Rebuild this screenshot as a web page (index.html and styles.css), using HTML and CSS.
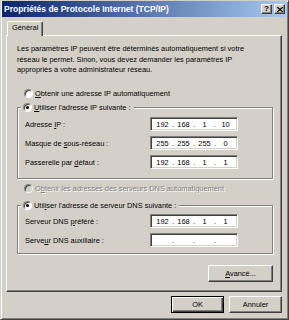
FILE: index.html
```html
<!DOCTYPE html>
<html lang="fr">

<head>
    <meta charset="UTF-8">
    <meta name="viewport" content="width=device-width, initial-scale=1.0">
    <title>Propriétés de Protocole Internet (TCP/IP)</title>
    <link rel="stylesheet" href="styles.css">
</head>

<body>

    <div class="window">
        <div class="titlebar">
            <span class="title">Propriétés de Protocole Internet (TCP/IP)</span>
            <div class="caption-buttons">
                <span class="cap-btn help">?</span>
                <span class="cap-btn">
                    <svg width="6" height="5" viewBox="0 0 6 5">
                        <path d="M0 0 L6 5 M6 0 L0 5" stroke="#000" stroke-width="1.3" fill="none" />
                    </svg>
                </span>
            </div>
        </div>

        <div class="tabs">
            <div class="tab">Général</div>
        </div>

        <div class="panel">
            <p class="intro">Les paramètres IP peuvent être déterminés automatiquement si votre<br>
                réseau le permet. Sinon, vous devez demander les paramètres IP<br>
                appropriés à votre administrateur réseau.</p>

            <div class="option first">
                <span class="radio"></span>
                <span><u>O</u>btenir une adresse IP automatiquement</span>
            </div>

            <div class="group group-ip">
                <div class="group-title">
                    <span class="radio on"></span>
                    <span><u>U</u>tiliser l'adresse IP suivante :</span>
                </div>
                <div class="fields">
                    <div class="field">
                        <span class="field-label">Adresse <u>I</u>P :</span>
                        <div class="ip">
                            <span class="octet">192</span><span class="dot">.</span>
                            <span class="octet">168</span><span class="dot">.</span>
                            <span class="octet">1</span><span class="dot">.</span>
                            <span class="octet">10</span>
                        </div>
                    </div>
                    <div class="field">
                        <span class="field-label">Masque de <u>s</u>ous-réseau :</span>
                        <div class="ip">
                            <span class="octet">255</span><span class="dot">.</span>
                            <span class="octet">255</span><span class="dot">.</span>
                            <span class="octet">255</span><span class="dot">.</span>
                            <span class="octet">0</span>
                        </div>
                    </div>
                    <div class="field">
                        <span class="field-label">Passerelle par <u>d</u>éfaut :</span>
                        <div class="ip">
                            <span class="octet">192</span><span class="dot">.</span>
                            <span class="octet">168</span><span class="dot">.</span>
                            <span class="octet">1</span><span class="dot">.</span>
                            <span class="octet">1</span>
                        </div>
                    </div>
                </div>
            </div>

            <div class="option disabled">
                <span class="radio"></span>
                <span>O<u>b</u>tenir les adresses des serveurs DNS automatiquement</span>
            </div>

            <div class="group group-dns">
                <div class="group-title">
                    <span class="radio on"></span>
                    <span>Util<u>i</u>ser l'adresse de serveur DNS suivante :</span>
                </div>
                <div class="fields">
                    <div class="field">
                        <span class="field-label">Serveur DNS <u>p</u>référé :</span>
                        <div class="ip">
                            <span class="octet">192</span><span class="dot">.</span>
                            <span class="octet">168</span><span class="dot">.</span>
                            <span class="octet">1</span><span class="dot">.</span>
                            <span class="octet">1</span>
                        </div>
                    </div>
                    <div class="field">
                        <span class="field-label">Serve<u>u</u>r DNS auxiliaire :</span>
                        <div class="ip">
                            <span class="octet"></span><span class="dot">.</span>
                            <span class="octet"></span><span class="dot">.</span>
                            <span class="octet"></span><span class="dot">.</span>
                            <span class="octet"></span>
                        </div>
                    </div>
                </div>
            </div>

            <div class="adv-row">
                <button type="button" class="btn adv"><u>A</u>vancé...</button>
            </div>
        </div>

        <div class="actions">
            <button type="button" class="btn default">OK</button>
            <button type="button" class="btn">Annuler</button>
        </div>
    </div>

</body>

</html>
```

FILE: styles.css
```css
body {
    margin: 0;
    font-family: "Liberation Sans", Arial, sans-serif;
    font-size: 7.4px;
    color: #000;
    background: #fff;
}

u {
    text-underline-offset: 1px;
}

.window {
    box-sizing: border-box;
    width: 289px;
    height: 320px;
    background: #d4d0c8;
    border: 1px solid;
    border-color: #d4d0c8 #404040 #404040 #d4d0c8;
    box-shadow: inset 1px 1px #fff, inset -1px -1px #808080;
    padding: 0 1px 1px 1px;
}

.titlebar {
    height: 16px;
    display: flex;
    align-items: center;
    justify-content: space-between;
    padding: 0 2px 0 2px;
    background: linear-gradient(to right, #0a246a, #a6caf0);
}

.title {
    color: #fff;
    font-weight: bold;
    font-size: 8.5px;
}

.caption-buttons {
    display: flex;
    gap: 2px;
}

.cap-btn {
    box-sizing: border-box;
    width: 11px;
    height: 10px;
    display: flex;
    align-items: center;
    justify-content: center;
    background: #d4d0c8;
    border: 1px solid;
    border-color: #fff #404040 #404040 #fff;
    box-shadow: inset -1px -1px #808080;
}

.help {
    font-weight: bold;
    font-size: 8px;
    line-height: 8px;
}

.tabs {
    display: flex;
    margin-top: 4px;
    padding-left: 5px;
}

.tab {
    position: relative;
    z-index: 1;
    box-sizing: border-box;
    width: 36px;
    height: 15px;
    margin-bottom: -1px;
    padding-left: 4px;
    line-height: 11px;
    background: #d4d0c8;
    border: 1px solid;
    border-bottom: none;
    border-color: #fff #404040 #fff #fff;
    border-radius: 2px 2px 0 0;
    box-shadow: inset -1px 0 #808080;
}

.panel {
    box-sizing: border-box;
    width: 276px;
    margin-left: 4px;
    padding: 8px 8px 9px 10px;
    border: 1px solid;
    border-color: #fff #404040 #404040 #fff;
    box-shadow: inset -1px -1px #808080;
}

.intro {
    margin: 0;
    line-height: 10.5px;
}

.option {
    display: flex;
    align-items: center;
    gap: 2px;
    height: 12px;
    padding-left: 7px;
}

.option.first {
    margin-top: 11.5px;
}

.option.disabled {
    margin-top: 3px;
    color: #808080;
    text-shadow: 1px 1px #fff;
}

.radio {
    flex: none;
    box-sizing: border-box;
    width: 9px;
    height: 9px;
    display: flex;
    align-items: center;
    justify-content: center;
    border-radius: 50%;
    border: 1px solid;
    border-color: #808080 #fff #fff #808080;
    background: #fff;
    box-shadow: inset 1px 1px #404040;
}

.disabled .radio {
    background: #d4d0c8;
}

.radio.on::after {
    content: "";
    width: 3px;
    height: 3px;
    border-radius: 50%;
    background: #000;
}

.group {
    border: 1px solid #808080;
    box-shadow: 1px 1px 0 #fff, inset 1px 1px 0 #fff;
}

.group-ip {
    margin-top: 8px;
    padding-bottom: 9px;
}

.group-dns {
    margin-top: 11px;
    padding-bottom: 6px;
}

.group-title {
    display: flex;
    align-items: center;
    gap: 2px;
    width: max-content;
    height: 12px;
    margin: -7px 0 0 3px;
    padding: 0 3px 0 2px;
    background: #d4d0c8;
}

.fields {
    display: flex;
    flex-direction: column;
    gap: 5px;
    padding-left: 7px;
}

.group-ip .fields {
    margin-top: 4px;
}

.group-dns .fields {
    margin-top: 3px;
}

.field {
    display: flex;
    align-items: center;
    height: 14px;
}

.field-label {
    width: 125px;
}

.ip {
    box-sizing: border-box;
    width: 88px;
    height: 14px;
    display: flex;
    align-items: center;
    padding-left: 3px;
    background: #fff;
    border: 1px solid;
    border-color: #808080 #fff #fff #808080;
    box-shadow: inset 1px 1px #404040, inset -1px -1px #d4d0c8;
}

.octet {
    width: 17px;
    text-align: center;
}

.dot {
    width: 4px;
    text-align: center;
}

.adv-row {
    display: flex;
    justify-content: flex-end;
    margin-top: 11px;
}

.btn {
    box-sizing: border-box;
    width: 53px;
    height: 17px;
    padding: 0;
    font: inherit;
    color: #000;
    background: #d4d0c8;
    border: 1px solid;
    border-color: #fff #404040 #404040 #fff;
    border-radius: 0;
    box-shadow: inset -1px -1px #808080;
}

.btn.adv {
    width: 65px;
}

.btn.default {
    border-color: #000;
    box-shadow: inset 1px 1px #fff, inset -1px -1px #404040, inset -2px -2px #808080;
}

.actions {
    display: flex;
    justify-content: flex-end;
    gap: 5px;
    margin-top: 4px;
    padding-right: 5px;
}
```
